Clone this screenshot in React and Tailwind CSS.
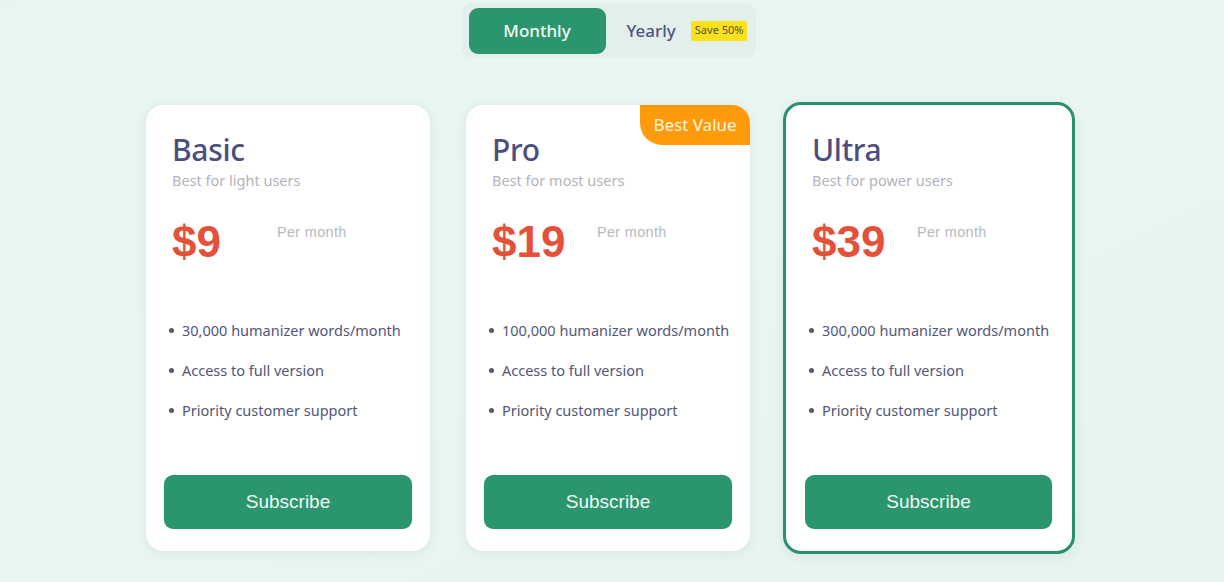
import React from "react";

const plans = [
  { name: "Basic", sub: "Best for light users", price: "$9", words: "30,000" },
  { name: "Pro", sub: "Best for most users", price: "$19", words: "100,000", badge: true },
  { name: "Ultra", sub: "Best for power users", price: "$39", words: "300,000", featured: true },
];

function Card({ p }) {
  return (
    <div
      className={`relative flex h-[446px] flex-col rounded-[18px] bg-white shadow-[0_2px_12px_rgba(60,110,100,0.10)] box-content ${
        p.featured ? "w-[286px] border-[3px] border-[#2b8f69]" : "w-[284px]"
      }`}
    >
      {p.badge && (
        <div className="absolute right-0 top-0 flex h-[40px] w-[110px] items-center justify-center rounded-tr-[18px] rounded-bl-[22px] bg-[#ff9a0b] text-[17px] text-[#fff6e0] font-['Noto_Sans',sans-serif]">
          Best Value
        </div>
      )}
      <div className="px-[26px] pt-[25px]">
        <div className="text-[30px] leading-[40px] font-medium text-[#4b4f7e] font-['Noto_Sans',sans-serif] tracking-[-0.3px]">
          {p.name}
        </div>
        <div className="mt-0 text-[14.5px] leading-[20px] text-[#b3b3b8] font-['Noto_Sans',sans-serif]">
          {p.sub}
        </div>
        <div className="mt-[26px] flex items-start">
          <div className="w-[105px] text-[44px] leading-[52px] font-bold text-[#e4513b] font-['Liberation_Sans',sans-serif]">
            {p.price}
          </div>
          <div className="mt-[6px] text-[14.5px] leading-[20px] text-[#b8b8bd] font-['Liberation_Sans',sans-serif] tracking-[0.3px]">
            Per month
          </div>
        </div>
      </div>
      <ul className="mt-[51px] flex flex-col gap-[18px] pl-[23px] font-['Noto_Sans',sans-serif] text-[14.5px] leading-[22px] text-[#52557a]">
        {[`${p.words} humanizer words/month`, "Access to full version", "Priority customer support"].map((t) => (
          <li key={t} className="flex items-center">
            <span className="mr-[8px] inline-block h-[5px] w-[5px] rounded-full bg-[#52557a]" />
            {t}
          </li>
        ))}
      </ul>
      <div className={`mt-auto pb-[22px] ${p.featured ? "pl-[19px] pr-[20px]" : "px-[18px]"}`}>
        <button className="flex h-[54px] w-full items-center justify-center rounded-[9px] bg-[#2b966d] text-[19px] text-[#f1fbf6] font-['Liberation_Sans',sans-serif]">
          Subscribe
        </button>
      </div>
    </div>
  );
}

export default function App() {
  return (
    <div className="min-h-[582px] w-full bg-gradient-to-br from-[#e9f5f2] via-[#eaf6f3] to-[#e6f3ef] flex flex-col items-center">
      <div className="mt-[3px] flex h-[55px] w-[294px] items-center rounded-[10px] bg-[#e2efec] px-[7px] ml-[-7px] font-['Noto_Sans',sans-serif]">
        <div className="flex h-[46px] w-[137px] items-center justify-center rounded-[9px] bg-[#2b966d] text-[17px] font-medium text-[#f4fbf8]">
          Monthly
        </div>
        <div className="ml-[21px] text-[17px] font-medium text-[#4f5580]">Yearly</div>
        <div className="ml-[15px] flex h-[20px] items-center bg-[#f9e21c] px-[4px] text-[11px] text-[#55503a] rounded-[2px]">
          Save 50%
        </div>
      </div>
      <div className="mt-[47px] flex items-start ml-[-3px]">
        {plans.map((p, i) => (
          <div
            key={p.name}
            className={p.featured ? "-mt-[3px] ml-[33px]" : i === 1 ? "ml-[36px]" : ""}
          >
            <Card p={p} />
          </div>
        ))}
      </div>
    </div>
  );
}
